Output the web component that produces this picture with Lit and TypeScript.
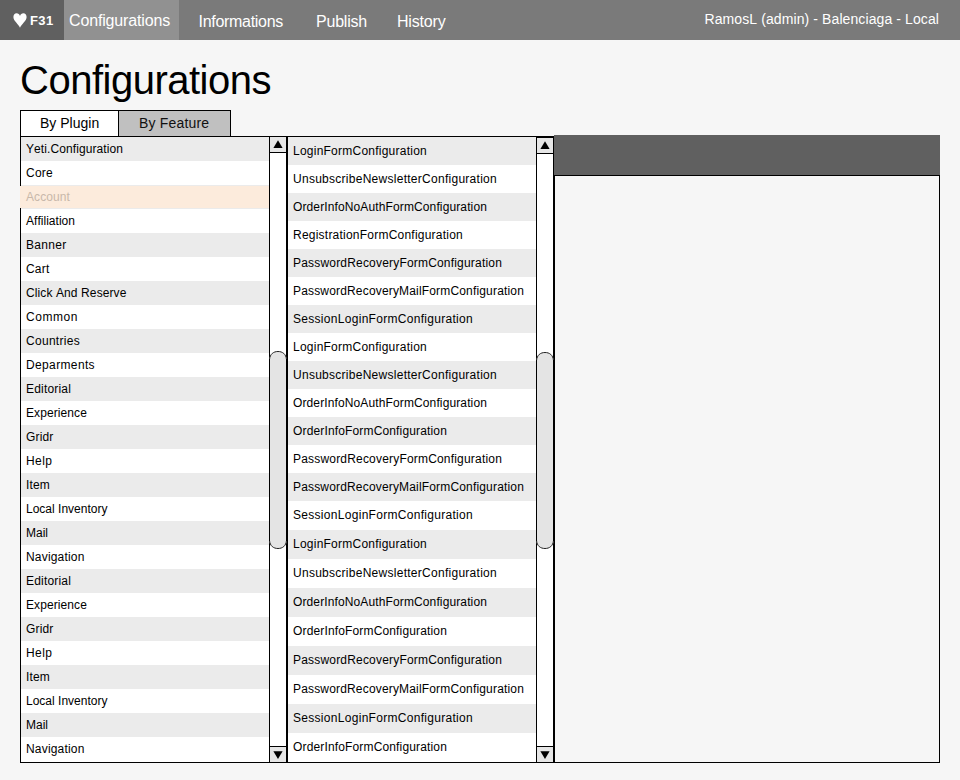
import { LitElement, html, css, svg } from "lit";
import { customElement, property } from "lit/decorators.js";

type Entry = [label: string, width: number];

/* A line of text tracked so that it occupies a given width. */
@customElement("tracked-text")
class TrackedText extends LitElement {
  @property() text = "";
  @property({ type: Number }) width = 0;

  static styles = css`
    :host { display: inline-block; white-space: pre; }
    span { display: inline-block; font-variant-ligatures: none; font-kerning: none; }
  `;

  render() {
    return html`<span>${this.text}</span>`;
  }

  updated() {
    const el = this.renderRoot.querySelector("span")!;
    el.style.letterSpacing = "0px";
    const natural = el.getBoundingClientRect().width;
    el.style.letterSpacing = `${(this.width - natural) / this.text.length}px`;
  }
}

const t = ([label, width]: Entry) =>
  html`<tracked-text .text=${label} .width=${width}></tracked-text>`;

@customElement("scroll-bar")
class ScrollBar extends LitElement {
  static styles = css`
    :host {
      display: flex;
      flex-direction: column;
      width: 16px;
      background: #fff;
      border: solid #000;
      border-width: 0 1px;
      position: relative;
    }
    .btn { height: 15px; background: #e6e6e6; display: flex; }
    .up { border-bottom: 1px solid #000; }
    .down { border-top: 1px solid #000; margin-top: auto; }
    .thumb { position: absolute; left: -1px; top: 214px; }
    svg { display: block; }
  `;

  @property({ type: Number }) thumb = 198;

  render() {
    const h = this.thumb;
    return html`
      <div class="btn up">
        <svg width="16" height="15" viewBox="0 0 16 15"><path d="M8 3.2 12.6 11H3.4Z" /></svg>
      </div>
      <svg class="thumb" width="18" height=${h} viewBox="0 0 18 ${h}">
        ${svg`<path fill="#e4e4e4" d="M0 9Q1 .5 9 .5T18 9V${h - 9}Q17 ${h - 0.5} 9 ${h - 0.5}T0 ${h - 9}Z"/>
        <path fill="none" stroke="#222" d="M.5 8.5C1 3 4.5 .5 9 .5S17 3 17.5 8.5M.5 ${h - 8.5}C1 ${h - 3} 4.5 ${h - 0.5} 9 ${h - 0.5}S17 ${h - 3} 17.5 ${h - 8.5}"/>
        <path fill="none" stroke="#000" d="M.5 8V${h - 8}M17.5 8V${h - 8}"/>`}
      </svg>
      <div class="btn down">
        <svg width="16" height="15" viewBox="0 0 16 15"><path d="M8 12 12.6 4.2H3.4Z" /></svg>
      </div>
    `;
  }
}

const plugins: Entry[] = [
  ["Yeti.Configuration", 97], ["Core", 27], ["Account", 44], ["Affiliation", 49],
  ["Banner", 40.5], ["Cart", 23.5], ["Click And Reserve", 100.5], ["Common", 52],
  ["Countries", 54], ["Deparments", 69], ["Editorial", 45], ["Experience", 61],
  ["Gridr", 27.5], ["Help", 26.5], ["Item", 24], ["Local Inventory", 81.5],
  ["Mail", 22], ["Navigation", 58.5], ["Editorial", 45], ["Experience", 61],
  ["Gridr", 27.5], ["Help", 26.5], ["Item", 24], ["Local Inventory", 81.5],
  ["Mail", 22], ["Navigation", 58.5],
];

const login: Entry = ["LoginFormConfiguration", 134];
const unsubscribe: Entry = ["UnsubscribeNewsletterConfiguration", 204];
const orderNoAuth: Entry = ["OrderInfoNoAuthFormConfiguration", 194];
const registration: Entry = ["RegistrationFormConfiguration", 170];
const recovery: Entry = ["PasswordRecoveryFormConfiguration", 209];
const recoveryMail: Entry = ["PasswordRecoveryMailFormConfiguration", 231];
const session: Entry = ["SessionLoginFormConfiguration", 180];
const order: Entry = ["OrderInfoFormConfiguration", 154];

const forms: Entry[] = [
  login, unsubscribe, orderNoAuth, registration, recovery, recoveryMail, session,
  login, unsubscribe, orderNoAuth, order, recovery, recoveryMail, session,
  login, unsubscribe, orderNoAuth, order, recovery, recoveryMail, session, order,
];

@customElement("app-root")
class AppRoot extends LitElement {
  static styles = css`
    :host {
      display: block;
      box-sizing: border-box;
      width: 960px;
      height: 780px;
      background: #f6f6f6;
      color: #000;
      font-family: "Liberation Sans", Arial, sans-serif;
      overflow: hidden;
    }
    header { display: flex; height: 40px; background: #7a7a7a; color: #fff; }
    .logo {
      width: 64px; box-sizing: border-box; padding-left: 13px; background: #606060;
      display: flex; gap: 3px; font: bold 13px/41px "Liberation Sans", Arial, sans-serif;
    }
    .logo svg { margin-top: 13px; }
    nav { display: flex; font-size: 16px; line-height: 43px; }
    nav div { box-sizing: border-box; height: 40px; }
    .current { width: 115px; background: #919191; padding-left: 5px; line-height: 41px; }
    .informations { margin-left: 19px; width: 117px; padding-left: 0.5px; }
    .publish { width: 82px; padding-left: 1px; }
    .user { margin-left: auto; padding-right: 21px; font-size: 14px; line-height: 38px; }
    main { padding: 0 20px; }
    h1 { margin: 0; height: 70px; font-size: 40px; font-weight: normal; line-height: 81px; }
    .tabs { display: flex; height: 26px; width: 211px; box-sizing: border-box;
      border: 1px solid #000; border-bottom: 0; font-size: 14px; line-height: 25px; }
    .tab { width: 97px; padding-left: 19px; box-sizing: border-box; background: #fff; }
    .tab.off { flex: 1; width: auto; padding-left: 20px; border-left: 1px solid #000; background: #c0c0c0; color: #111; }
    .panels { display: flex; height: 627px; align-items: stretch; }
    .list {
      box-sizing: border-box; border: solid #000; border-width: 1px 0 1px 1px;
      display: flex; background: #fff; font-size: 12px;
    }
    .rows { width: 248px; }
    .row { height: 24px; line-height: 24px; padding-left: 5px; background: #fff; }
    .row:nth-child(odd) { background: #ebebeb; }
    .row.picked {
      position: relative; margin: 1px 0 1px -1px; padding-left: 6px; height: 22px; line-height: 22px;
      background: #fcebdc; color: #c8b8aa; box-shadow: 1px 1px #ebebeb, 1px -1px #ebebeb; clip-path: inset(-1px 0);
    }
    .second .row { height: 28px; line-height: 28px; }
    .second .row:nth-child(n + 14) { height: 29px; }
    .second scroll-bar { border-top: 1px solid #000; }
    .detail { width: 386px; display: flex; flex-direction: column; margin-top: -1px; }
    .band { height: 40px; background: #606060; }
    .body { flex: 1; border: 1px solid #000; }
  `;

  render() {
    return html`
      <header>
        <div class="logo">
          <svg width="14" height="15" viewBox="0 0 14 15">
            <path fill="#fff" d="M7 14.7C5.8 11.2 .4 8.2 .4 4 .4 1.6 1.8 .2 3.6 .2 5.2 .2 6.5 1.2 7 3 7.5 1.2 8.8 .2 10.4 .2 12.2 .2 13.6 1.6 13.6 4 13.6 8.2 8.2 11.2 7 14.7Z" />
          </svg>
          ${t(["F31", 23.6])}
        </div>
        <nav>
          <div class="current">${t(["Configurations", 101])}</div>
          <div class="informations">${t(["Informations", 84.5])}</div>
          <div class="publish">${t(["Publish", 51])}</div>
          <div>${t(["History", 48.5])}</div>
        </nav>
        <div class="user">${t(["RamosL (admin) - Balenciaga - Local", 234.5])}</div>
      </header>
      <main>
        <h1>${t(["Configurations", 251])}</h1>
        <div class="tabs">
          <div class="tab">${t(["By Plugin", 59.2])}</div>
          <div class="tab off">${t(["By Feature", 70.2])}</div>
        </div>
        <section class="panels">
          <div class="list">
            <div class="rows">
              ${plugins.map((p) => html`<div class="row ${p[0] === "Account" ? "picked" : ""}">${t(p)}</div>`)}
            </div>
            <scroll-bar .thumb=${198}></scroll-bar>
          </div>
          <div class="list second">
            <div class="rows">${forms.map((f) => html`<div class="row">${t(f)}</div>`)}</div>
            <scroll-bar .thumb=${197}></scroll-bar>
          </div>
          <div class="detail">
            <div class="band"></div>
            <div class="body"></div>
          </div>
        </section>
      </main>
    `;
  }
}
